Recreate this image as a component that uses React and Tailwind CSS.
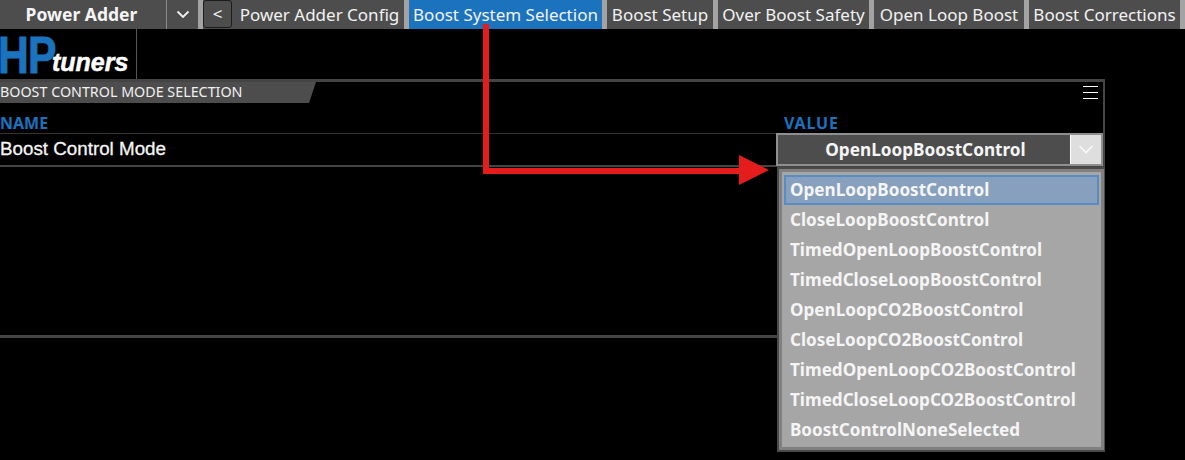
import React from "react";

function Tab({ children, w, active }) {
  return (
    <div
      style={{ width: w }}
      className={`h-full shrink-0 flex items-center justify-center whitespace-nowrap text-[17px] leading-none border-r-[5px] border-[#a3a3a3] text-[#f2f2f2] ${active ? "bg-[#1b72bd]" : "bg-[#4d4d4d]"}`}
    >
      {children}
    </div>
  );
}

const options = [
  "OpenLoopBoostControl",
  "CloseLoopBoostControl",
  "TimedOpenLoopBoostControl",
  "TimedCloseLoopBoostControl",
  "OpenLoopCO2BoostControl",
  "CloseLoopCO2BoostControl",
  "TimedOpenLoopCO2BoostControl",
  "TimedCloseLoopCO2BoostControl",
  "BoostControlNoneSelected",
];

export default function App() {
  return (
    <div className="relative w-[1185px] h-[460px] bg-black overflow-hidden text-white font-['Noto_Sans',sans-serif]">
      {/* top bar */}
      <div className="flex h-[29px] bg-[#4d4d4d]">
        <div className="w-[167px] h-full shrink-0 border-r border-[#8a8a8a] flex items-center justify-center font-bold text-[17.5px] text-[#f5f5f5] pr-[3px]">
          Power Adder
        </div>
        <div className="w-[36px] h-full shrink-0 flex items-center justify-center border-r-[5px] border-[#a3a3a3]">
          <svg width="14" height="9" viewBox="0 0 14 9" fill="none" stroke="#f2f2f2" strokeWidth="1.8">
            <path d="M1.5 1.5 L7 7 L12.5 1.5" />
          </svg>
        </div>
        <div className="w-[32px] h-full shrink-0 flex items-start">
          <div className="w-[29px] h-[28px] rounded-[3px] border border-[#1c1c1c] bg-[#4d4d4d] flex items-center justify-center text-[17px] text-[#f2f2f2]">
            &lt;
          </div>
        </div>
        <Tab w={174}>Power Adder Config</Tab>
        <Tab w={198} active>Boost System Selection</Tab>
        <Tab w={111}>Boost Setup</Tab>
        <Tab w={156}>Over Boost Safety</Tab>
        <Tab w={155}>Open Loop Boost</Tab>
        <Tab w={156}>Boost Corrections</Tab>
      </div>

      {/* logo */}
      <div className="h-[50px] w-[137px] border-r border-[#555] overflow-hidden relative">
        <span className="absolute left-[-2px] top-[-2px] origin-left scale-x-[0.82] text-[#1b72bd] font-bold text-[52px] leading-[56px] tracking-[-1px] font-['Liberation_Sans',sans-serif] [-webkit-text-stroke:1px_#1b72bd]">HP</span>
        <span className="absolute left-[52px] top-[18px] text-white font-bold italic text-[25px] leading-[30px] font-['Liberation_Sans',sans-serif] [-webkit-text-stroke:0.5px_white]">tuners</span>
      </div>

      {/* panel */}
      <div className="w-[1105px] h-[259px] border-t-[3px] border-r-[2px] border-b-[3px] border-[#444]">
        <div className="flex items-start justify-between h-[30px]">
          <div className="w-[316px] h-[21px] bg-[#4d4d4d] [clip-path:polygon(0_0,100%_0,97.8%_100%,0_100%)] flex items-center text-[14.3px] text-[#f0f0f0] leading-none whitespace-nowrap">
            BOOST CONTROL MODE SELECTION
          </div>
          <div className="mt-[4px] mr-[5px] w-[15px] flex flex-col gap-[5px]">
            <div className="h-[1px] bg-white" />
            <div className="h-[1px] bg-white" />
            <div className="h-[1px] bg-white" />
          </div>
        </div>
        <div className="flex h-[22px] items-center border-b border-[#333] font-bold text-[16px] text-[#1b72bd]">
          <div className="w-[784px]">NAME</div>
          <div className="tracking-[0.8px]">VALUE</div>
        </div>
        <div className="flex h-[33px] border-b-2 border-[#444]">
          <div className="w-[776px] pt-[4px] text-[18.8px] leading-[22px] font-['Liberation_Sans',sans-serif] text-[#f5f5f5] [-webkit-text-stroke:0.3px_#f5f5f5] whitespace-nowrap">Boost Control Mode</div>
          <div className="w-[327px] h-[33px] -mt-[1px] flex border-2 border-[#8f8f8f] bg-[#4d4d4d]">
            <div className="flex-1 flex items-center justify-center font-bold text-[17.2px] text-[#f5f5f5] pl-[3px] pt-[1px]">OpenLoopBoostControl</div>
            <div className="w-[31px] bg-[#dedede] flex items-center justify-center border-l border-white">
              <svg width="16" height="9" viewBox="0 0 16 9" fill="none" stroke="#fafafa" strokeWidth="1.6">
                <path d="M1.5 1 L8 7.5 L14.5 1" />
              </svg>
            </div>
          </div>
        </div>
      </div>

      {/* dropdown */}
      <div className="absolute left-[777px] top-[167px] w-[328px] h-[285px] bg-[#4a4a4a] p-[2px] pr-[0px]">
        <div className="w-[325px] h-[281px] bg-[#a6a6a6] border-[3px] border-[#808080] pt-[3px] pl-[2px] pr-[2px] flex flex-col font-bold text-[17.1px] text-[#f5f5f5]">
          {options.map((o, i) => (
            <div
              key={o}
              className={`h-[30px] shrink-0 flex items-center whitespace-nowrap ${i === 0 ? "bg-[#87a0bd] border-2 border-[#5a8cc4] pl-[4px]" : "pl-[6px]"}`}
            >
              {o}
            </div>
          ))}
        </div>
      </div>

      {/* annotation arrow */}
      <svg className="absolute left-0 top-0 pointer-events-none" width="1185" height="460" fill="none">
        <path d="M486 24 V171 H745" stroke="#e51c1c" strokeWidth="6" />
        <path d="M739 155 L769 170 L739 185 Z" fill="#e51c1c" />
      </svg>
    </div>
  );
}
